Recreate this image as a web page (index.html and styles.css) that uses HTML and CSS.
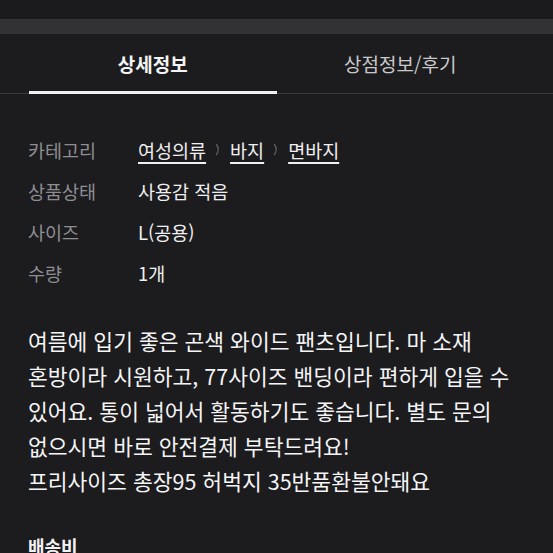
FILE: index.html
```html
<!DOCTYPE html>
<html lang="ko">
<head>
<meta charset="utf-8">
<link rel="stylesheet" href="styles.css">
</head>
<body>
<div class="topbar"></div>
<div class="strip"></div>
<nav class="tabs">
  <div class="tab active">상세정보</div>
  <div class="tab">상점정보/후기</div>
</nav>
<section class="info">
  <div class="row">
    <div class="label">카테고리</div>
    <div class="value crumbs">
      <a class="crumb">여성의류</a>
      <svg class="chev" width="6" height="13" viewBox="0 0 6 13"><path d="M1.5 1.5 Q5 6.5 1.5 11.5" fill="none" stroke="#5a5a5f" stroke-width="1.4" stroke-linecap="round"/></svg>
      <a class="crumb">바지</a>
      <svg class="chev" width="6" height="13" viewBox="0 0 6 13"><path d="M1.5 1.5 Q5 6.5 1.5 11.5" fill="none" stroke="#5a5a5f" stroke-width="1.4" stroke-linecap="round"/></svg>
      <a class="crumb">면바지</a>
    </div>
  </div>
  <div class="row">
    <div class="label">상품상태</div>
    <div class="value">사용감 적음</div>
  </div>
  <div class="row">
    <div class="label">사이즈</div>
    <div class="value">L(공용)</div>
  </div>
  <div class="row">
    <div class="label">수량</div>
    <div class="value">1개</div>
  </div>
</section>
<p class="desc">여름에 입기 좋은 곤색 와이드 팬츠입니다. 마 소재 혼방이라 시원하고, 77사이즈 밴딩이라 편하게 입을 수 있어요. 통이 넓어서 활동하기도 좋습니다. 별도 문의 없으시면 바로 안전결제 부탁드려요!<br>프리사이즈 총장95 허벅지 35반품환불안돼요</p>
<h3 class="ship">배송비</h3>
</body>
</html>
```

FILE: styles.css
```css
* { box-sizing: border-box; }
html, body {
  margin: 0;
  padding: 0;
  background: #1c1c1e;
  font-family: "Noto Sans CJK KR", "Noto Sans", sans-serif;
  color: #ececee;
  overflow: hidden;
}
.topbar { height: 19px; background: #1b1b1d; }
.strip { height: 15px; background: #323235; }
.tabs {
  display: flex;
  padding: 0 29px;
  border-bottom: 1px solid #3a3a3d;
}
.tab {
  flex: 1;
  height: 60px;
  margin-bottom: -1px;
  border-bottom: 3px solid transparent;
  display: flex;
  align-items: center;
  justify-content: center;
  padding-top: 2px;
  font-size: 19px;
  color: #c9c9cc;
}
.tab.active {
  color: #f4f4f5;
  font-weight: 700;
  border-bottom-color: #f0f0f2;
}
.info { padding: 35px 28px 0; }
.row {
  display: flex;
  height: 41px;
  align-items: center;
  font-size: 18.5px;
}
.label { width: 110px; color: #8d8d92; }
.value { color: #f0f0f2; }
.crumbs { display: flex; align-items: center; gap: 9px; }
.crumb {
  text-decoration: underline;
  text-decoration-thickness: 1.5px;
  text-underline-offset: 4px;
}
.chev { display: block; }
.desc {
  margin: 30px 0 0;
  padding: 0 28px;
  font-size: 21.5px;
  line-height: 35px;
  color: #f5f5f7;
  word-break: keep-all;
}
.ship {
  margin: 36px 0 0;
  padding: 0 28px;
  font-size: 18px;
  line-height: 24px;
  font-weight: 700;
  color: #f2f2f4;
}
```
